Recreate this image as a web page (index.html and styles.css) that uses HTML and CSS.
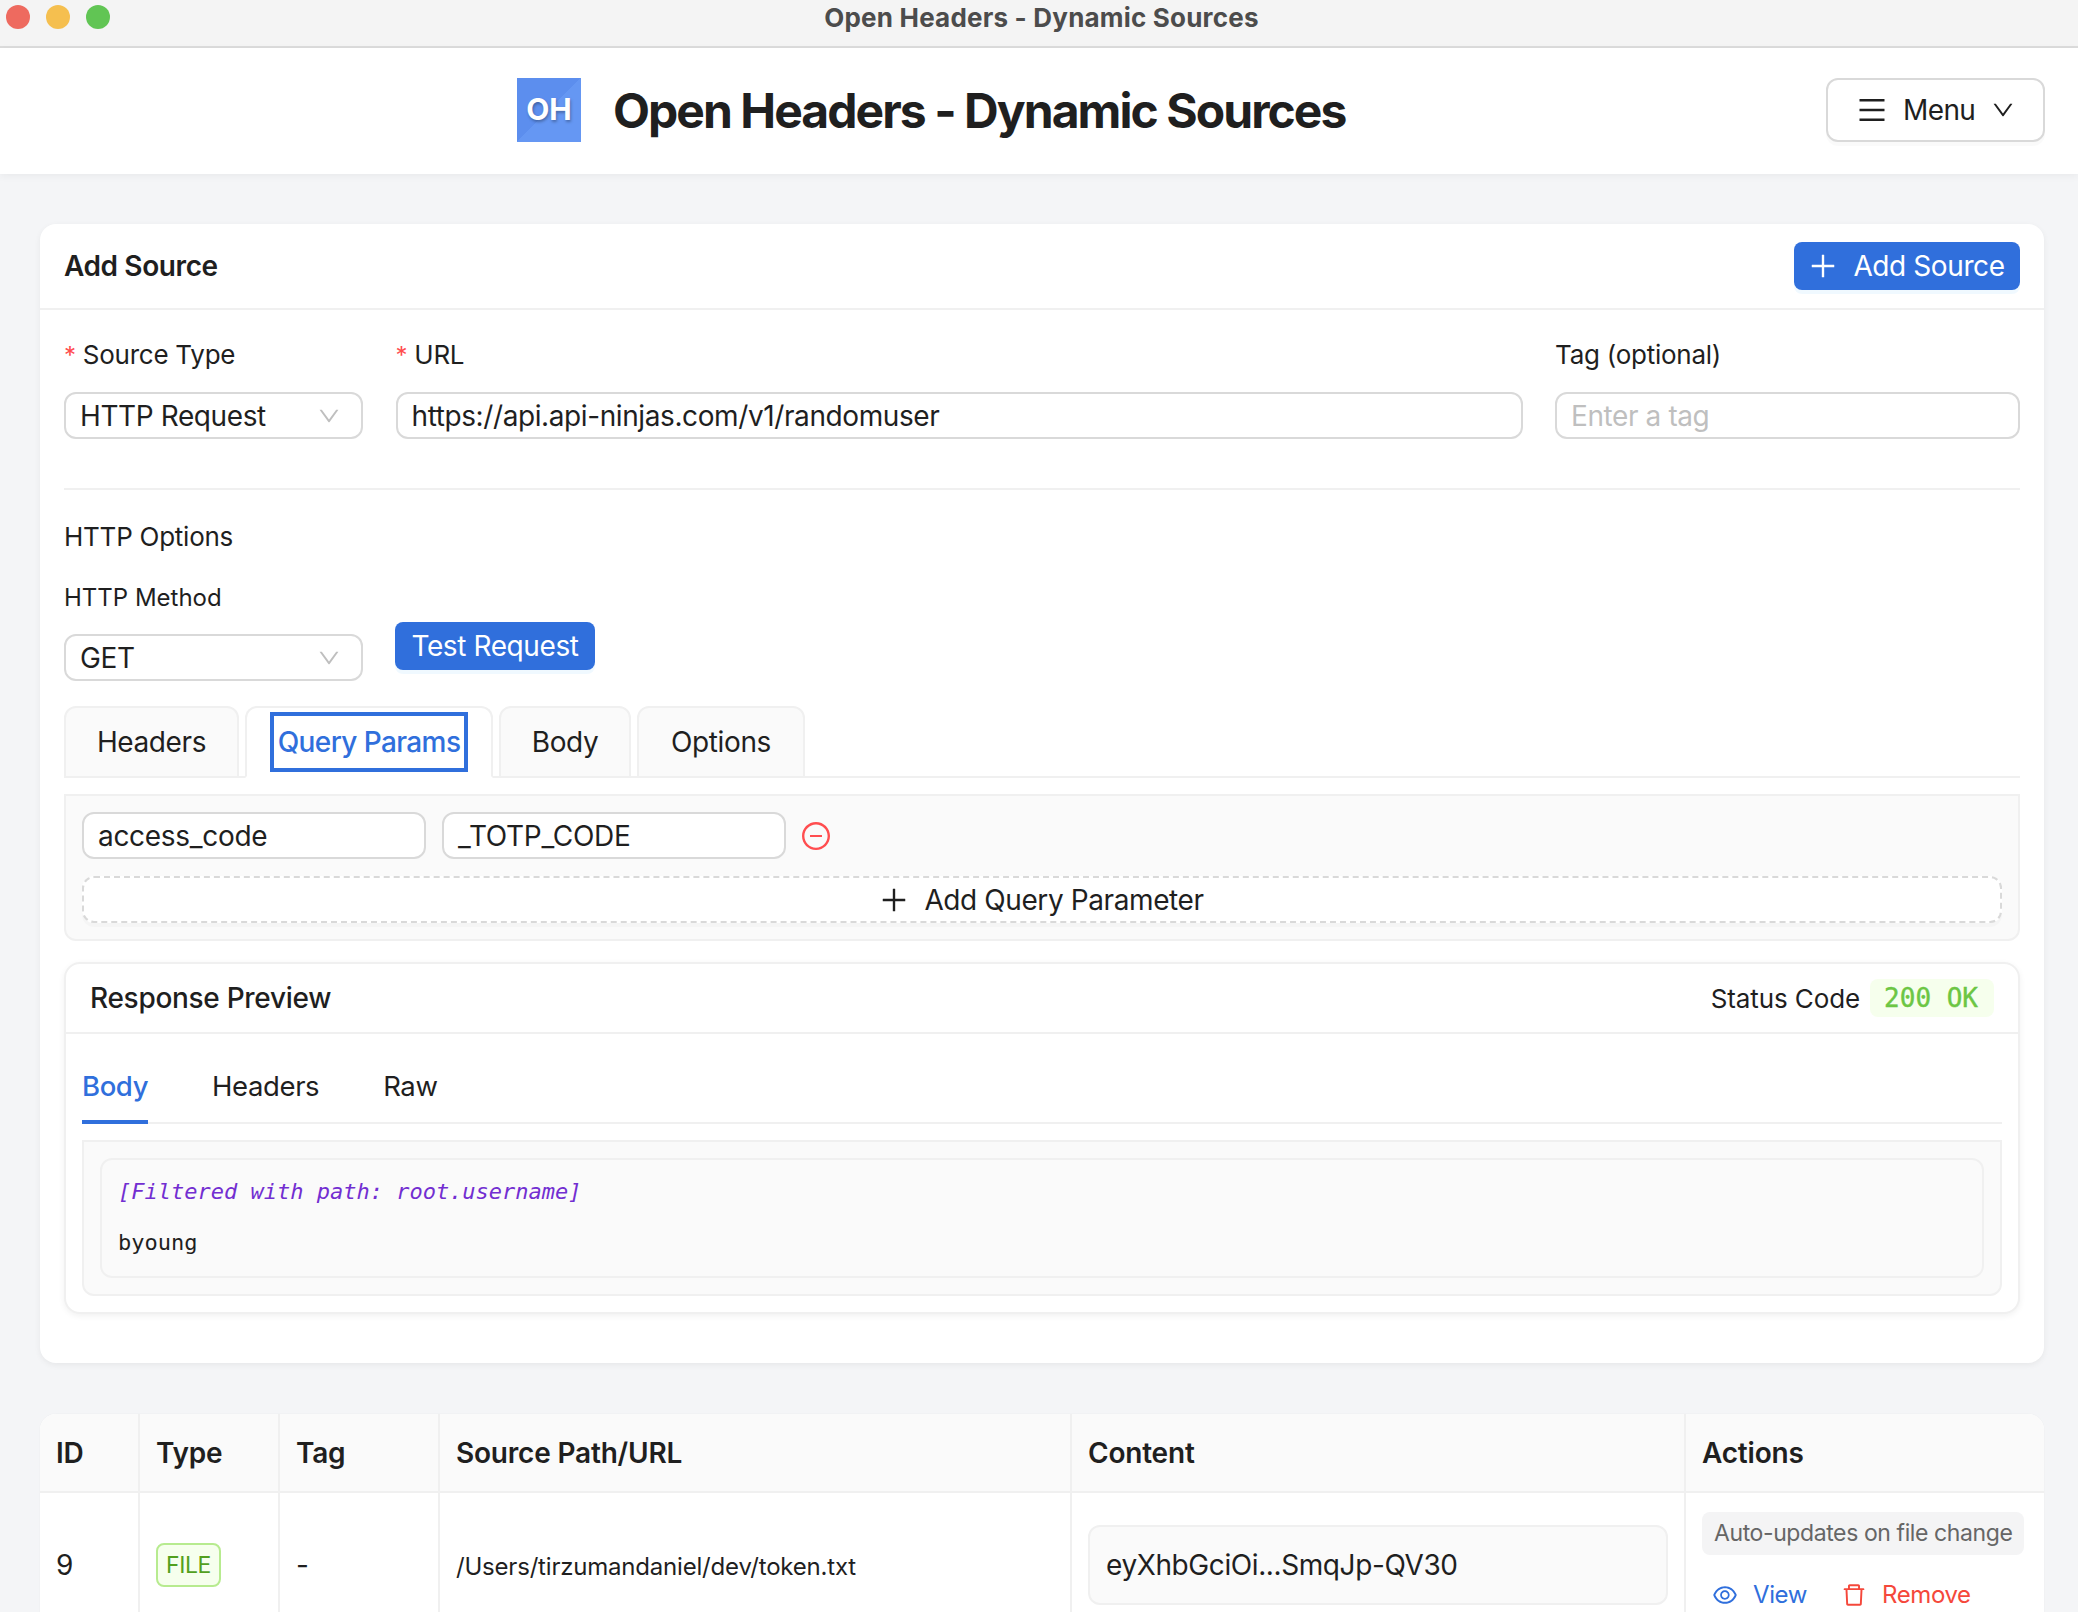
FILE: index.html
```html
<!DOCTYPE html>
<html lang="en">
<head>
    <meta charset="UTF-8">
    <title>Open Headers - Dynamic Sources</title>
    <link rel="stylesheet" href="styles.css">
</head>
<body>
    <div class="titlebar">
        <div class="lights">
            <span class="light red"></span>
            <span class="light yellow"></span>
            <span class="light green"></span>
        </div>
        <div class="window-title">Open Headers - Dynamic Sources</div>
        <div></div>
    </div>

    <header class="app-header">
        <div class="logo">OH</div>
        <h1>Open Headers - Dynamic Sources</h1>
        <button class="menu-btn">
            <svg class="icon menu-icon" viewBox="64 64 896 896"><path d="M904 160H120c-4.400 0-8 3.600-8 8v64c0 4.400 3.600 8 8 8h784c4.400 0 8-3.600 8-8v-64c0-4.400-3.600-8-8-8zm0 624H120c-4.400 0-8 3.600-8 8v64c0 4.400 3.600 8 8 8h784c4.400 0 8-3.600 8-8v-64c0-4.400-3.600-8-8-8zm0-312H120c-4.400 0-8 3.600-8 8v64c0 4.400 3.600 8 8 8h784c4.400 0 8-3.600 8-8v-64c0-4.400-3.600-8-8-8z"/></svg>
            <span>Menu</span>
            <svg class="icon chevron" viewBox="64 64 896 896"><path d="M884 256h-75c-5.100 0-9.900 2.500-12.900 6.600L512 654.200 227.900 262.600c-3-4.100-7.800-6.600-12.900-6.600h-75c-6.500 0-10.300 7.400-6.500 12.700l352.600 486.100c12.800 17.600 39 17.600 51.700 0l352.600-486.100c3.900-5.300.1-12.700-6.400-12.700z"/></svg>
        </button>
    </header>

    <main class="content">
        <section class="card">
            <div class="card-head">
                <h2>Add Source</h2>
                <button class="btn-primary add-source">
                    <svg class="icon plus" viewBox="64 64 896 896"><path d="M482 152h60q8 0 8 8v704q0 8-8 8h-60q-8 0-8-8V160q0-8 8-8z"/><path d="M192 474h672q8 0 8 8v60q0 8-8 8H160q-8 0-8-8v-60q0-8 8-8z"/></svg>
                    Add Source
                </button>
            </div>
            <div class="card-body">
                <div class="source-row">
                    <div>
                        <label class="field-label"><span class="req">*</span>Source Type</label>
                        <div class="select">
                            <span>HTTP Request</span>
                            <svg class="icon select-arrow" viewBox="64 64 896 896"><path d="M884 256h-75c-5.100 0-9.900 2.500-12.900 6.600L512 654.200 227.900 262.600c-3-4.100-7.800-6.600-12.900-6.600h-75c-6.500 0-10.300 7.400-6.500 12.700l352.600 486.100c12.800 17.600 39 17.600 51.700 0l352.600-486.100c3.900-5.300.1-12.700-6.400-12.700z"/></svg>
                        </div>
                    </div>
                    <div>
                        <label class="field-label"><span class="req">*</span>URL</label>
                        <div class="input">https://api.api-ninjas.com/v1/randomuser</div>
                    </div>
                    <div>
                        <label class="field-label">Tag (optional)</label>
                        <div class="input placeholder">Enter a tag</div>
                    </div>
                </div>

                <div class="divider"></div>

                <div class="section-label">HTTP Options</div>
                <div class="method-label">HTTP Method</div>
                <div class="method-row">
                    <div class="select method-select">
                        <span>GET</span>
                        <svg class="icon select-arrow" viewBox="64 64 896 896"><path d="M884 256h-75c-5.100 0-9.900 2.500-12.900 6.600L512 654.200 227.900 262.600c-3-4.100-7.800-6.600-12.900-6.600h-75c-6.500 0-10.300 7.400-6.500 12.700l352.600 486.100c12.800 17.600 39 17.600 51.700 0l352.600-486.100c3.900-5.300.1-12.700-6.400-12.700z"/></svg>
                    </div>
                    <button class="btn-primary test-btn">Test Request</button>
                </div>

                <div class="card-tabs">
                    <div class="card-tab headers-tab">Headers</div>
                    <div class="card-tab active"><span class="focus-box">Query Params</span></div>
                    <div class="card-tab body-tab">Body</div>
                    <div class="card-tab options-tab">Options</div>
                </div>

                <div class="params-panel">
                    <div class="param-row">
                        <div class="input param-input">access_code</div>
                        <div class="input param-input">_TOTP_CODE</div>
                        <svg class="icon remove-param" viewBox="64 64 896 896"><path d="M696 480H328c-4.400 0-8 3.600-8 8v48c0 4.400 3.600 8 8 8h368c4.400 0 8-3.600 8-8v-48c0-4.400-3.600-8-8-8z"/><path d="M512 64C264.600 64 64 264.600 64 512s200.600 448 448 448 448-200.600 448-448S759.400 64 512 64zm0 820c-205.400 0-372-166.600-372-372s166.600-372 372-372 372 166.600 372 372-166.600 372-372 372z"/></svg>
                    </div>
                    <button class="add-param">
                        <svg class="icon plus" viewBox="64 64 896 896"><path d="M482 152h60q8 0 8 8v704q0 8-8 8h-60q-8 0-8-8V160q0-8 8-8z"/><path d="M192 474h672q8 0 8 8v60q0 8-8 8H160q-8 0-8-8v-60q0-8 8-8z"/></svg>
                        Add Query Parameter
                    </button>
                </div>

                <div class="response">
                    <div class="response-head">
                        <h3>Response Preview</h3>
                        <div class="status">
                            <span>Status Code</span>
                            <span class="status-tag">200 OK</span>
                        </div>
                    </div>
                    <div class="response-body">
                        <div class="line-tabs">
                            <div class="line-tab active">Body</div>
                            <div class="line-tab">Headers</div>
                            <div class="line-tab">Raw</div>
                        </div>
                        <div class="tab-pane">
                            <div class="code-box">
                                <div class="filter-note">[Filtered with path: root.username]</div>
                                <div class="code-value">byoung</div>
                            </div>
                        </div>
                    </div>
                </div>
            </div>
        </section>

        <div class="table-wrap">
            <table class="sources">
                <colgroup>
                    <col class="col-id"><col class="col-type"><col class="col-tag"><col class="col-path"><col class="col-content"><col class="col-actions">
                </colgroup>
                <thead>
                    <tr>
                        <th>ID</th>
                        <th>Type</th>
                        <th>Tag</th>
                        <th>Source Path/URL</th>
                        <th>Content</th>
                        <th>Actions</th>
                    </tr>
                </thead>
                <tbody>
                    <tr>
                        <td>9</td>
                        <td><span class="file-tag">FILE</span></td>
                        <td>-</td>
                        <td class="path">/Users/tirzumandaniel/dev/token.txt</td>
                        <td><div class="content-box">eyXhbGciOi...SmqJp-QV30</div></td>
                        <td class="actions">
                            <div class="auto-note">Auto-updates on file change</div>
                            <div class="action-links">
                                <a class="view">
                                    <svg class="icon" viewBox="64 64 896 896"><path d="M942.200 486.200C847.400 286.500 704.100 186 512 186c-192.200 0-335.400 100.500-430.200 300.300a60.300 60.300 0 000 51.500C176.600 737.500 319.900 838 512 838c192.200 0 335.400-100.500 430.200-300.300 7.700-16.200 7.700-35 0-51.500zM512 766c-161.300 0-279.400-81.800-362.700-254C232.600 339.800 350.700 258 512 258c161.300 0 279.400 81.800 362.700 254C791.500 684.200 673.400 766 512 766zm-4-430c-97.200 0-176 78.800-176 176s78.800 176 176 176 176-78.800 176-176-78.800-176-176-176zm0 288c-61.900 0-112-50.100-112-112s50.100-112 112-112 112 50.100 112 112-50.100 112-112 112z"/></svg>
                                    View
                                </a>
                                <a class="remove">
                                    <svg class="icon" viewBox="64 64 896 896"><path d="M360 184h-8c4.400 0 8-3.600 8-8v8h304v-8c0 4.400 3.600 8 8 8h-8v72h72v-80c0-35.300-28.700-64-64-64H352c-35.300 0-64 28.700-64 64v80h72v-72zm504 72H160c-17.700 0-32 14.300-32 32v32c0 4.400 3.600 8 8 8h60.400l24.700 523c1.600 34.100 29.800 61 63.900 61h454c34.200 0 62.300-26.800 63.900-61l24.700-523H888c4.400 0 8-3.600 8-8v-32c0-17.700-14.300-32-32-32zM731.300 840H292.700l-24.200-512h487l-24.200 512z"/></svg>
                                    Remove
                                </a>
                            </div>
                        </td>
                    </tr>
                </tbody>
            </table>
        </div>
    </main>
</body>
</html>
```

FILE: styles.css
```css
* {
    box-sizing: border-box;
}
html, body {
    height: 1612px;
    overflow: hidden;
}
body {
    margin: 0;
    background-color: #f4f5f7;
    color: #1f1f1f;
    font-family: Inter, "Liberation Sans", sans-serif;
    font-size: 28px;
    letter-spacing: -0.4px;
}
button {
    font-family: inherit;
    font-size: inherit;
    letter-spacing: inherit;
    cursor: pointer;
}
.icon {
    display: block;
    width: 1em;
    height: 1em;
    fill: currentColor;
    flex: none;
}

/* window chrome */
.titlebar {
    display: grid;
    grid-template-columns: 1fr auto 1fr;
    align-items: center;
    height: 48px;
    padding-bottom: 12px;
    background: #f4f4f4;
    border-bottom: 2px solid #dcdcdc;
}
.lights {
    display: flex;
    gap: 16px;
    padding-left: 6px;
}
.light {
    width: 24px;
    height: 24px;
    border-radius: 50%;
}
.red { background: #ee6a5f; }
.yellow { background: #f5bf4f; }
.green { background: #61c554; }
.window-title {
    margin-left: 5px;
    font-size: 26px;
    font-weight: 700;
    letter-spacing: 0.2px;
    color: #4c4c4c;
}

/* app header */
.app-header {
    display: flex;
    align-items: center;
    height: 126px;
    padding: 0 33px 2px 517px;
    background: #fff;
    box-shadow: 0 2px 8px rgba(0, 0, 0, 0.05);
}
.logo {
    display: flex;
    align-items: center;
    justify-content: center;
    width: 64px;
    height: 64px;
    padding-bottom: 2px;
    background: linear-gradient(135deg, #5c8eee 50%, #6597f3 50%);
    color: #fff;
    font-size: 30px;
    font-weight: 700;
    letter-spacing: 0;
    text-shadow: 1px 2px 3px rgba(0, 0, 0, 0.3);
}
h1 {
    margin: 0 0 0 32px;
    font-size: 48px;
    font-weight: 700;
    letter-spacing: -1.95px;
}
.menu-btn {
    display: flex;
    align-items: center;
    gap: 17px;
    width: 219px;
    height: 64px;
    margin-left: auto;
    padding: 0 30px;
    background: #fff;
    color: #1f1f1f;
    border: 2px solid #d9d9d9;
    border-radius: 12px;
    box-shadow: 0 4px 0 rgba(0, 0, 0, 0.02);
}
.menu-btn span {
    letter-spacing: -0.6px;
}
.menu-icon {
    font-size: 28px;
}
.chevron {
    font-size: 22px;
}

/* add source card */
.content {
    padding: 50px 34px 0 40px;
}
.card {
    height: 1139px;
    background: #fff;
    border-radius: 16px;
    box-shadow: 0 2px 6px rgba(0, 0, 0, 0.06);
}
.card-head {
    display: flex;
    align-items: center;
    justify-content: space-between;
    height: 86px;
    padding: 0 24px;
    border-bottom: 2px solid #f0f0f0;
}
h2 {
    margin: 0;
    font-size: 28px;
    font-weight: 600;
}
.btn-primary {
    display: flex;
    align-items: center;
    justify-content: center;
    height: 48px;
    background: #306fdc;
    color: #fff;
    border: none;
    border-radius: 8px;
    box-shadow: 0 4px 0 rgba(5, 145, 255, 0.06);
}
.add-source {
    width: 226px;
    gap: 16px;
}
.plus {
    font-size: 28px;
}
.card-body {
    padding: 23px 24px 0;
}
.source-row {
    display: grid;
    grid-template-columns: 299px 1127px 465px;
    column-gap: 32.500px;
}
.field-label {
    display: block;
    height: 44px;
    margin-bottom: 15px;
    font-size: 26px;
    letter-spacing: -0.25px;
    line-height: 44px;
}
.req {
    margin-right: 7px;
    color: #ff4d4f;
    font-size: 24px;
}
.input, .select {
    display: flex;
    align-items: center;
    height: 47px;
    padding: 0 14px;
    background: #fff;
    border: 2px solid #d9d9d9;
    border-radius: 12px;
    font-size: 28px;
}
.select {
    justify-content: space-between;
}
.select-arrow {
    margin-right: 7px;
    font-size: 22px;
    color: #bfbfbf;
}
.placeholder {
    color: #bfbfbf;
}
.divider {
    height: 2px;
    margin-top: 49px;
    background: #f0f0f0;
}
.section-label {
    margin-top: 25px;
    line-height: 44px;
    font-size: 26px;
    letter-spacing: -0.25px;
}
.method-label {
    margin-top: 17px;
    line-height: 44px;
    font-size: 24px;
    letter-spacing: 0;
}
.method-row {
    display: flex;
    align-items: flex-end;
    gap: 32px;
    margin-top: 2px;
}
.method-select {
    width: 299px;
}
.test-btn {
    width: 200px;
    margin-bottom: 11px;
}

/* card tabs */
.card-tabs {
    display: flex;
    gap: 6px;
    height: 72px;
    margin-top: 25px;
    border-bottom: 2px solid #f0f0f0;
}
.card-tab {
    display: flex;
    align-items: center;
    justify-content: center;
    height: 72px;
    background: #fafafa;
    border: 2px solid #f0f0f0;
    border-radius: 12px 12px 0 0;
}
.headers-tab { width: 175px; }
.body-tab { width: 132px; }
.options-tab { width: 168px; }
.card-tab.active {
    width: 248px;
    background: #fff;
    border-bottom-color: #fff;
    color: #306fdc;
    font-weight: 500;
    letter-spacing: -0.6px;
}
.focus-box {
    display: flex;
    align-items: center;
    justify-content: center;
    width: 198px;
    height: 60px;
    border: 4px solid #306fdc;
}
.params-panel {
    display: flex;
    flex-direction: column;
    gap: 17px;
    height: 147px;
    margin-top: 16px;
    padding: 16px;
    background: #fafafa;
    border: 2px solid #f0f0f0;
    border-radius: 0 0 12px 12px;
}
.param-row {
    display: flex;
    align-items: center;
    gap: 16px;
}
.param-input {
    width: 344px;
    letter-spacing: -0.3px;
}
.remove-param {
    width: 28px;
    height: 28px;
    color: #ff4d4f;
}
.add-param {
    display: flex;
    align-items: center;
    justify-content: center;
    gap: 16px;
    height: 47px;
    background: #fff;
    color: #1f1f1f;
    border: 2px dashed #d9d9d9;
    border-radius: 12px;
    box-shadow: 0 4px 0 rgba(0, 0, 0, 0.02);
}

/* response preview */
.response {
    margin-top: 21px;
    background: #fff;
    border: 2px solid #f0f0f0;
    border-radius: 16px;
    box-shadow: 0 2px 6px rgba(0, 0, 0, 0.06);
}
.response-head {
    display: flex;
    align-items: center;
    justify-content: space-between;
    height: 70px;
    padding: 0 24px;
    border-bottom: 2px solid #f0f0f0;
}
h3 {
    margin: 0;
    font-size: 28px;
    font-weight: 500;
    letter-spacing: -0.3px;
}
.status {
    display: flex;
    align-items: center;
    gap: 10px;
    font-size: 26px;
    letter-spacing: -0.1px;
}
.status-tag {
    padding: 0 16px 0 14px;
    height: 38px;
    line-height: 38px;
    background: #f6ffed;
    border-radius: 8px;
    color: #6cc644;
    font-family: "DejaVu Sans Mono", monospace;
    font-size: 26px;
    letter-spacing: 0;
    -webkit-text-stroke: 0.4px #6cc644;
}
.response-body {
    padding: 16px 16px 16px;
}
.line-tabs {
    display: flex;
    gap: 64px;
    border-bottom: 2px solid #f0f0f0;
}
.line-tab {
    padding: 14px 0;
    font-size: 27.500px;
    line-height: 44px;
}
.line-tab.active {
    margin-bottom: -2px;
    padding-bottom: 12px;
    border-bottom: 4px solid #306fdc;
    color: #306fdc;
    font-weight: 500;
}
.tab-pane {
    margin-top: 16px;
    padding: 16px;
    background: #fafafa;
    border: 2px solid #f0f0f0;
    border-radius: 0 0 12px 12px;
}
.code-box {
    height: 120px;
    padding: 16px;
    background: #fafafa;
    border: 2px solid #f0f0f0;
    border-radius: 12px;
    font-family: "DejaVu Sans Mono", monospace;
    font-size: 22px;
    letter-spacing: 0;
    line-height: 32px;
}
.filter-note {
    color: #722ed1;
    font-style: italic;
}
.code-value {
    margin-top: 19px;
}

/* sources table */
.table-wrap {
    margin-top: 51px;
    background: #fff;
    border-radius: 16px 16px 0 0;
    overflow: hidden;
    box-shadow: 0 0 0 1px rgba(0, 0, 0, 0.01);
}
.sources {
    width: 100%;
    table-layout: fixed;
    border-collapse: separate;
    border-spacing: 0;
}
.col-id { width: 100px; }
.col-type { width: 140px; }
.col-tag { width: 160px; }
.col-path { width: 632px; }
.col-content { width: 614px; }
.col-actions { width: 358px; }
.sources th {
    height: 79px;
    padding: 0 16px;
    background: #fafafa;
    border-right: 2px solid #f0f0f0;
    border-bottom: 2px solid #f0f0f0;
    text-align: left;
    font-weight: 600;
    letter-spacing: -0.2px;
}
.sources td {
    height: 144px;
    padding: 0 16px;
    border-right: 2px solid #f0f0f0;
}
.sources th:last-child, .sources td:last-child {
    border-right: none;
}
.file-tag {
    display: inline-block;
    height: 44px;
    padding: 0 8px;
    line-height: 40px;
    background: #f6ffed;
    border: 2px solid #b7eb8f;
    border-radius: 8px;
    color: #52a01e;
    font-size: 23px;
}
.sources td.path {
    padding-top: 3px;
    font-size: 24px;
    letter-spacing: -0.2px;
}
.content-box {
    display: flex;
    align-items: center;
    height: 80px;
    padding: 0 16px;
    background: #fafafa;
    border: 2px solid #f0f0f0;
    border-radius: 12px;
}
.sources td.actions {
    padding: 19px 0 0 16px;
    vertical-align: top;
}
.auto-note {
    width: 322px;
    height: 43px;
    padding-left: 12px;
    line-height: 43px;
    background: #f4f4f5;
    border-radius: 8px;
    color: #666;
    font-size: 23px;
    white-space: nowrap;
}
.action-links {
    display: flex;
    gap: 35px;
    margin-top: 25px;
    padding-left: 11px;
    font-size: 24px;
}
.action-links a {
    display: flex;
    align-items: center;
    gap: 16px;
}
.action-links .icon {
    font-size: 24px;
}
.view { color: #306fdc; }
.remove { color: #f5483b; }
```
